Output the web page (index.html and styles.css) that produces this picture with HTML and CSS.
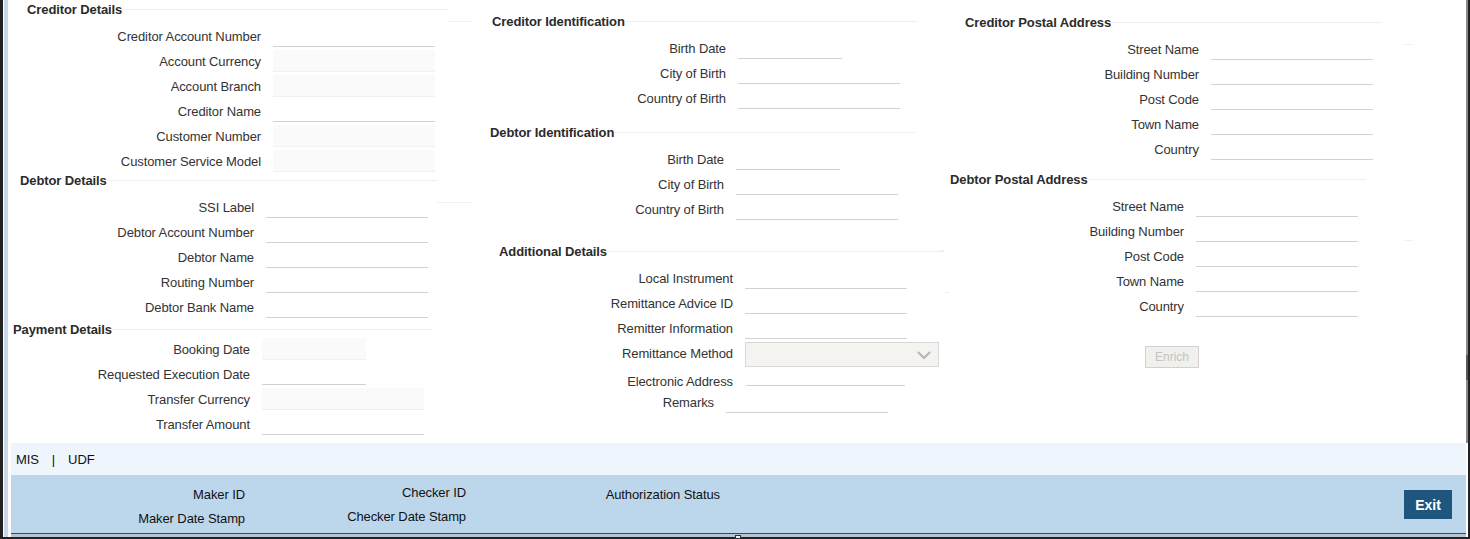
FILE: index.html
```html
<!DOCTYPE html>
<html lang="en">
<head>
    <meta charset="UTF-8">
    <title>Payment Details</title>
    <link rel="stylesheet" href="styles.css">
</head>
<body>
    <div class="window">
        <div class="dialog">
            <main class="form-area">
                <!-- Left column -->
                <div class="col col-1">
                    <section class="section creditor-details">
                        <h2 class="section-title">Creditor Details</h2>
                        <div class="row"><label>Creditor Account Number</label><input type="text"></div>
                        <div class="row"><label>Account Currency</label><input type="text" disabled></div>
                        <div class="row"><label>Account Branch</label><input type="text" disabled></div>
                        <div class="row"><label>Creditor Name</label><input type="text"></div>
                        <div class="row"><label>Customer Number</label><input type="text" disabled></div>
                        <div class="row"><label>Customer Service Model</label><input type="text" disabled></div>
                    </section>
                    <section class="section debtor-details">
                        <h2 class="section-title">Debtor Details</h2>
                        <div class="row"><label>SSI Label</label><input type="text"></div>
                        <div class="row"><label>Debtor Account Number</label><input type="text"></div>
                        <div class="row"><label>Debtor Name</label><input type="text"></div>
                        <div class="row"><label>Routing Number</label><input type="text"></div>
                        <div class="row"><label>Debtor Bank Name</label><input type="text"></div>
                    </section>
                    <section class="section payment-details">
                        <h2 class="section-title">Payment Details</h2>
                        <div class="row"><label>Booking Date</label><input class="short" type="text" disabled></div>
                        <div class="row"><label>Requested Execution Date</label><input class="short" type="text"></div>
                        <div class="row"><label>Transfer Currency</label><input type="text" disabled></div>
                        <div class="row"><label>Transfer Amount</label><input type="text"></div>
                    </section>
                </div>

                <!-- Middle column -->
                <div class="col col-2">
                    <section class="section creditor-id">
                        <h2 class="section-title">Creditor Identification</h2>
                        <div class="row"><label>Birth Date</label><input class="short" type="text"></div>
                        <div class="row"><label>City of Birth</label><input type="text"></div>
                        <div class="row"><label>Country of Birth</label><input type="text"></div>
                    </section>
                    <section class="section debtor-id">
                        <h2 class="section-title">Debtor Identification</h2>
                        <div class="row"><label>Birth Date</label><input class="short" type="text"></div>
                        <div class="row"><label>City of Birth</label><input type="text"></div>
                        <div class="row"><label>Country of Birth</label><input type="text"></div>
                    </section>
                    <section class="section additional">
                        <h2 class="section-title">Additional Details</h2>
                        <div class="row"><label>Local Instrument</label><input type="text"></div>
                        <div class="row"><label>Remittance Advice ID</label><input type="text"></div>
                        <div class="row"><label>Remitter Information</label><input type="text"></div>
                        <div class="row row-method"><label>Remittance Method</label>
                            <div class="select">
                                <svg width="14" height="8" viewBox="0 0 14 8"><path d="M1 1l6 6 6-6" fill="none" stroke="#b4b4b4" stroke-width="2"/></svg>
                            </div>
                        </div>
                        <div class="row row-email"><label>Electronic Address</label><input type="text"></div>
                        <div class="row row-remarks"><label>Remarks</label><input type="text"></div>
                    </section>
                </div>

                <!-- Right column -->
                <div class="col col-3">
                    <section class="section creditor-postal">
                        <h2 class="section-title">Creditor Postal Address</h2>
                        <div class="row"><label>Street Name</label><input type="text"></div>
                        <div class="row"><label>Building Number</label><input type="text"></div>
                        <div class="row"><label>Post Code</label><input type="text"></div>
                        <div class="row"><label>Town Name</label><input type="text"></div>
                        <div class="row"><label>Country</label><input type="text"></div>
                    </section>
                    <section class="section debtor-postal">
                        <h2 class="section-title">Debtor Postal Address</h2>
                        <div class="row"><label>Street Name</label><input type="text"></div>
                        <div class="row"><label>Building Number</label><input type="text"></div>
                        <div class="row"><label>Post Code</label><input type="text"></div>
                        <div class="row"><label>Town Name</label><input type="text"></div>
                        <div class="row"><label>Country</label><input type="text"></div>
                    </section>
                    <button class="enrich" type="button" disabled>Enrich</button>
                </div>

                <span class="stray stray-a"></span>
                <span class="stray stray-b"></span>
                <span class="stray stray-c"></span>
                <span class="stray stray-d"></span>
                <span class="stray stray-e"></span>
                <span class="stray stray-f"></span>

                <div class="scrollbar"><span class="thumb"></span></div>
            </main>

            <nav class="links">
                <a>MIS</a>
                <span class="sep">|</span>
                <a>UDF</a>
            </nav>

            <footer class="audit">
                <div class="audit-col maker">
                    <div>Maker ID</div>
                    <div>Maker Date Stamp</div>
                </div>
                <div class="audit-col checker">
                    <div>Checker ID</div>
                    <div>Checker Date Stamp</div>
                </div>
                <div class="audit-col status">
                    <div>Authorization Status</div>
                </div>
                <button class="exit" type="button">Exit</button>
            </footer>
        </div>
        <span class="resize-handle"></span>
    </div>
</body>
</html>
```

FILE: styles.css
```css
* {
    box-sizing: border-box;
}

html, body {
    height: 100%;
}

body {
    margin: 0;
    background: #222;
    font-family: "Liberation Sans", Arial, sans-serif;
    font-size: 13px;
    letter-spacing: -0.1px;
    color: #333;
    overflow: hidden;
}

.window {
    position: relative;
    width: 1465px;
    height: 537px;
    margin-left: 3px;
    padding-left: 1px;
    background: #fff;
}

.dialog {
    height: 100%;
    border-left: 4px solid #c9d8e8;
    display: flex;
    flex-direction: column;
}

/* grey-blue strip under the audit bar */
.dialog::after {
    content: "";
    flex: 1;
    margin: 0 2px 0 3px;
    background: #b7c5d6;
}

.form-area {
    position: relative;
    display: flex;
    height: 443px;
    background: #fff;
}

.col-1 {
    width: 482px;
}

.col-2 {
    width: 460px;
}

.col-3 {
    flex: 1;
}

.section-title {
    display: flex;
    align-items: center;
    height: 18px;
    margin: 0 0 5px;
    font-size: 13px;
    font-weight: bold;
    color: #2b2b2b;
    white-space: nowrap;
}

.section-title::after {
    content: "";
    flex: 1;
    height: 1px;
    background: #eeeeee;
}

.row {
    display: flex;
    align-items: center;
    height: 25px;
}

.row label {
    width: 234px;
    margin-right: 12px;
    padding-top: 2px;
    text-align: right;
    white-space: nowrap;
    line-height: 16px;
}

.row input {
    width: 162px;
    height: 22px;
    padding: 0 4px;
    border: none;
    border-bottom: 1px solid #d2d2d2;
    background: #fff;
    outline: none;
}

.row input.short {
    width: 104px;
}

.row input:disabled {
    background: #fafafa;
    border-bottom-color: #f0f0f0;
}

/* Each panel sits at its own offset in the original form */
.creditor-details {
    width: 422px;
    margin-left: 19px;
}

.debtor-details {
    width: 417px;
    margin: -2px 0 0 12px;
}

.payment-details {
    width: 419px;
    margin: 1px 0 0 5px;
}

.payment-details .section-title {
    margin-bottom: -2px;
}

.payment-details .row label {
    width: 237px;
}

.creditor-id {
    width: 425px;
    margin: 12px 0 0 2px;
}

.debtor-id {
    width: 425px;
    margin-top: 13px;
}

.additional {
    width: 445px;
    margin: 21px 0 0 9px;
}

.row-method {
    margin-top: 2px;
}

.row-method label {
    padding: 0 0 2px;
}

.row-email {
    height: 22px;
    align-items: flex-end;
}

.row-email label {
    padding-top: 0;
    margin-bottom: -1px;
}

.row-email input {
    width: 159px;
    height: 19px;
    margin: 0 0 3px 1px;
}

.row-remarks label {
    width: 215px;
}

.select {
    display: flex;
    align-items: center;
    justify-content: flex-end;
    width: 194px;
    height: 25px;
    padding-right: 7px;
    background: #f4f3f0;
    border: 1px solid #d8d8d8;
}

.creditor-postal {
    width: 416px;
    margin: 13px 0 0 15px;
}

.debtor-postal {
    width: 416px;
    margin-top: 9px;
}

.enrich {
    display: block;
    width: 54px;
    height: 22px;
    margin: 28px 0 0 195px;
    padding: 0;
    font-family: inherit;
    font-size: 12px;
    color: #c4c4c4;
    background: #f1f0ec;
    border: 1px solid #d0d0d0;
}

.stray {
    position: absolute;
    height: 1px;
    background: #f0f0f0;
}

.stray-a { left: 441px; top: 21px; width: 23px; }
.stray-b { left: 429px; top: 202px; width: 35px; }
.stray-c { left: 937px; top: 292px; width: 4px; }
.stray-d { left: 1396px; top: 44px; width: 9px; }
.stray-e { left: 1396px; top: 240px; width: 9px; }
.stray-f { left: 932px; top: 250px; width: 4px; }

.scrollbar {
    position: absolute;
    top: 0;
    right: 0;
    bottom: 0;
    width: 2px;
    background: #8a8a8a;
}

.thumb {
    position: absolute;
    top: 355px;
    left: 0;
    width: 2px;
    height: 25px;
    background: #5a5a5a;
}

.links {
    display: flex;
    align-items: center;
    height: 32px;
    margin: 0 2px 0 3px;
    padding-left: 5px;
    background: #eef5fd;
    color: #111;
}

.sep {
    margin: 0 13px;
}

.audit {
    display: flex;
    align-items: flex-start;
    height: 59px;
    margin: 0 2px 0 3px;
    background: #bcd7ec;
    border-bottom: 1px solid #1f4e8a;
    color: #111;
}

.audit-col {
    display: flex;
    flex-direction: column;
    gap: 8px;
    text-align: right;
    line-height: 16px;
    white-space: nowrap;
}

.maker {
    width: 234px;
    padding-top: 12px;
}

.checker {
    width: 221px;
    padding-top: 10px;
}

.status {
    width: 254px;
    padding-top: 12px;
}

.exit {
    width: 48px;
    height: 29px;
    margin: 15px 14px 0 auto;
    padding: 0;
    font-family: inherit;
    font-size: 14px;
    font-weight: bold;
    letter-spacing: 0;
    color: #fff;
    background: #1f567d;
    border: none;
}

.resize-handle {
    position: absolute;
    left: 732px;
    bottom: -2px;
    width: 6px;
    height: 4px;
    background: #eee;
    border: 1px solid #333;
}
```
